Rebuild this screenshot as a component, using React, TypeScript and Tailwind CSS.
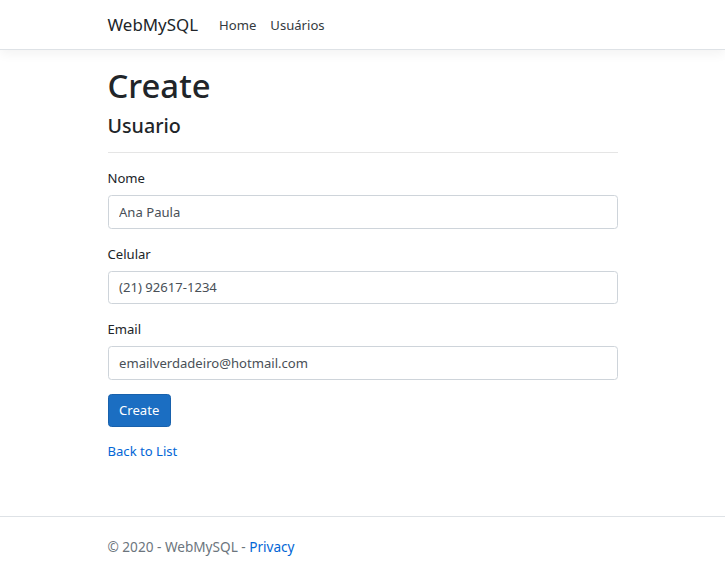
import React from "react";

export default function App() {
  return (
    <div
      className="min-h-screen flex flex-col bg-white text-[#212529] text-[13.1px] leading-[21px]"
      style={{ fontFamily: '"Noto Sans", "Open Sans", sans-serif' }}
    >
      <header>
        <nav className="bg-white border-b border-[#dee2e6] shadow-[0_3.5px_10.5px_rgba(0,0,0,0.05)] py-[7px] mb-[14px]">
          <div className="w-[540px] mx-auto px-[15px] flex items-center h-[35px]">
            <a className="text-[16.9px] leading-[26px] mr-[14px] pt-[1px] text-[#212529]">WebMySQL</a>
            <ul className="flex pt-[2px]">
              <li><a className="block px-[7px] text-[#343a40]">Home</a></li>
              <li><a className="block px-[7px] text-[#343a40]">Usuários</a></li>
            </ul>
          </div>
        </nav>
      </header>
      <div className="w-[540px] mx-auto px-[15px]">
        <main className="pb-[14px]">
          <h1 className="text-[32.8px] leading-[42px] font-medium pt-[1px] mb-[6px]">Create</h1>
          <h4 className="text-[19.7px] leading-[25px] font-medium">Usuario</h4>
          <hr className="mt-[14px] mb-[14px] border-0 border-t border-[rgba(0,0,0,0.1)]" />
          <div>
            <form>
              {[
                ["Nome", "Ana Paula"],
                ["Celular", "(21) 92617-1234"],
                ["Email", "emailverdadeiro@hotmail.com"],
              ].map(([l, v]) => (
                <div key={l} className="mb-[14px]">
                  <label className="block pt-[1px] mb-[6px]">{l}</label>
                  <input
                    readOnly
                    value={v}
                    className="block w-full h-[33.5px] px-[10.5px] py-[5.25px] border border-[#ced4da] rounded-[3.5px] text-[#495057] text-[13.1px] leading-[21px] bg-white outline-none"
                  />
                </div>
              ))}
              <div className="mb-[14px]">
                <button
                  type="button"
                  className="h-[33.5px] px-[10.5px] text-white bg-[#1b6ec2] border border-[#1861ac] rounded-[3.5px] text-[13.1px] leading-[21px]"
                >
                  Create
                </button>
              </div>
            </form>
          </div>
          <div className="pt-[1px] -mt-[1px]">
            <a className="text-[#0366d6]">Back to List</a>
          </div>
        </main>
      </div>
      <footer className="mt-auto border-t border-[#dee2e6] text-[#6c757d] text-[13.6px] leading-[60px] whitespace-nowrap">
        <div className="w-[540px] mx-auto px-[15px]">
          © 2020 - WebMySQL - <a className="text-[#0366d6]">Privacy</a>
        </div>
      </footer>
    </div>
  );
}
